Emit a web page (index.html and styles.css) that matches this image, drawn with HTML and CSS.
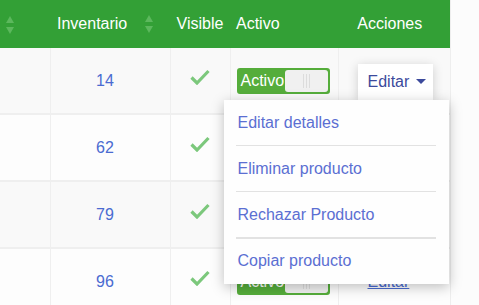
FILE: index.html
```html
<!DOCTYPE html>
<html lang="es">
<head>
    <meta charset="UTF-8">
    <meta name="viewport" content="width=device-width, initial-scale=1.0">
    <title>Productos</title>
    <link rel="stylesheet" href="styles.css">
</head>
<body>

<table class="products">
    <colgroup>
        <col class="c-name">
        <col class="c-stock">
        <col class="c-visible">
        <col class="c-active">
        <col class="c-actions">
    </colgroup>
    <thead>
        <tr>
            <th class="th-first"><span class="sort"></span></th>
            <th class="th-sort"><span>Inventario</span><span class="sort"></span></th>
            <th class="th-center">Visible</th>
            <th>Activo</th>
            <th class="th-actions">Acciones</th>
        </tr>
    </thead>
    <tbody>
        <tr>
            <td></td>
            <td class="num">14</td>
            <td class="check"><svg width="20" height="16" viewBox="0 0 20 16"><path d="M1.5 8.5 L7 14 L18.5 2" fill="none" stroke="#7cc87c" stroke-width="3.2"/></svg></td>
            <td><div class="switch"><span class="switch-on">Activo</span><span class="switch-handle"><i></i><i></i><i></i></span></div></td>
            <td class="actions">
                <div class="dropdown">
                    <button class="dropdown-toggle">Editar <span class="caret"></span></button>
                    <ul class="dropdown-menu">
                        <li><a href="#">Editar detalles</a></li>
                        <li class="divider"></li>
                        <li><a href="#">Eliminar producto</a></li>
                        <li class="divider"></li>
                        <li><a href="#">Rechazar Producto</a></li>
                        <li class="divider thick"></li>
                        <li><a href="#">Copiar producto</a></li>
                    </ul>
                </div>
            </td>
        </tr>
        <tr>
            <td></td>
            <td class="num">62</td>
            <td class="check"><svg width="20" height="16" viewBox="0 0 20 16"><path d="M1.5 8.5 L7 14 L18.5 2" fill="none" stroke="#7cc87c" stroke-width="3.2"/></svg></td>
            <td></td>
            <td class="actions"></td>
        </tr>
        <tr>
            <td></td>
            <td class="num">79</td>
            <td class="check"><svg width="20" height="16" viewBox="0 0 20 16"><path d="M1.5 8.5 L7 14 L18.5 2" fill="none" stroke="#7cc87c" stroke-width="3.2"/></svg></td>
            <td></td>
            <td class="actions"></td>
        </tr>
        <tr>
            <td></td>
            <td class="num">96</td>
            <td class="check"><svg width="20" height="16" viewBox="0 0 20 16"><path d="M1.5 8.5 L7 14 L18.5 2" fill="none" stroke="#7cc87c" stroke-width="3.2"/></svg></td>
            <td><div class="switch"><span class="switch-on">Activo</span><span class="switch-handle"><i></i><i></i><i></i></span></div></td>
            <td class="actions"><a class="edit-link" href="#">Editar</a></td>
        </tr>
    </tbody>
</table>

</body>
</html>
```

FILE: styles.css
```css
body {
    margin: 0;
    background-color: #fcfcfc;
    font-family: "Liberation Sans", Arial, sans-serif;
    font-size: 16px;
    overflow: hidden;
}

.products {
    width: 450px;
    table-layout: fixed;
    border-collapse: collapse;
    border-right: 1px solid #eeeeee;
}

.c-name { width: 50px; }
.c-stock { width: 120px; }
.c-visible { width: 60px; }
.c-active { width: 108px; }
.c-actions { width: 112px; }

/* Header */
.products thead th {
    height: 48px;
    padding: 0 6px;
    background-color: #33a036;
    color: #ffffff;
    font-weight: normal;
    text-align: left;
}

.th-first {
    padding-left: 6px;
}

.th-sort span:first-child {
    margin-left: 1px;
}

.th-sort {
    position: relative;
}

.th-sort .sort {
    position: absolute;
    right: 16px;
    top: 14px;
}

.th-center {
    text-align: center !important;
}

.th-actions {
    text-align: center !important;
    padding-right: 14px !important;
}

.sort {
    display: inline-block;
    position: relative;
    width: 9px;
    height: 19px;
    vertical-align: middle;
}

.sort::before, .sort::after {
    content: "";
    position: absolute;
    left: 0;
    border-left: 4.5px solid transparent;
    border-right: 4.5px solid transparent;
}

.sort::before {
    top: 1px;
    border-bottom: 7px solid #5cb85d;
}

.sort::after {
    bottom: 0;
    border-top: 7px solid #5cb85d;
}

/* Body */
.products tbody td {
    height: 65px;
    padding: 0;
    border-bottom: 2px solid #efefef;
    border-left: 1px solid #efefef;
    vertical-align: middle;
}

.products tbody td:first-child {
    border-left: none;
}

.products tbody tr:nth-child(odd) td {
    background-color: #f9f9f9;
}

.products tbody tr:nth-child(even) td {
    background-color: #fdfdfd;
}

.num {
    text-align: center;
    padding-right: 10px !important;
    color: #4a6bd1;
}

.check {
    text-align: center;
}

.check svg {
    display: inline-block;
    vertical-align: middle;
    margin-bottom: 8px;
}

/* Switch */
.switch {
    display: flex;
    width: 89px;
    height: 22px;
    margin-left: 6px;
    border: 2px solid #55ad3b;
    border-radius: 3px;
    background-color: #55ad3b;
    overflow: hidden;
}

.switch-on {
    width: 44px;
    padding-left: 2px;
    color: #ffffff;
    line-height: 22px;
}

.switch-handle {
    flex: 1;
    display: flex;
    justify-content: center;
    align-items: center;
    gap: 2px;
    background-color: #f0f0f0;
    border-radius: 3px;
}

.switch-handle i {
    display: block;
    width: 1px;
    height: 14px;
    background-color: #dcdcdc;
}

/* Actions */
.actions {
    text-align: left;
}

.edit-link {
    margin-left: 29px;
    color: #4a6bd1;
    text-decoration: underline;
}

.dropdown {
    position: relative;
    margin-left: 19px;
    width: 75px;
}

.dropdown-toggle {
    display: block;
    width: 75px;
    height: 36px;
    margin-top: 0;
    padding: 0 0 0 10px;
    border: none;
    background-color: #ffffff;
    color: #3c4a9c;
    font-family: inherit;
    font-size: 16px;
    text-align: left;
    box-shadow: 0 2px 10px rgba(0, 0, 0, 0.18);
    position: relative;
    top: 1px;
}

.caret {
    display: inline-block;
    margin-left: 2px;
    vertical-align: 3px;
    border-left: 5px solid transparent;
    border-right: 5px solid transparent;
    border-top: 5px solid #3c4a9c;
}

.dropdown-menu {
    position: absolute;
    top: 37px;
    right: -16px;
    width: 225px;
    margin: 0;
    padding: 0;
    list-style: none;
    background-color: #fefefe;
    box-shadow: 0 3px 12px rgba(0, 0, 0, 0.25);
    z-index: 2;
}

.dropdown-menu a {
    display: block;
    height: 45px;
    line-height: 46px;
    padding-left: 14px;
    color: #5b6fd2;
    text-decoration: none;
}

.dropdown-menu li:last-child a {
    height: 46px;
}

.divider {
    height: 1px;
    margin: 0 13px 0 12px;
    background-color: #e2e2e2;
}

.divider.thick {
    height: 2px;
    margin-bottom: -1px;
}
```
